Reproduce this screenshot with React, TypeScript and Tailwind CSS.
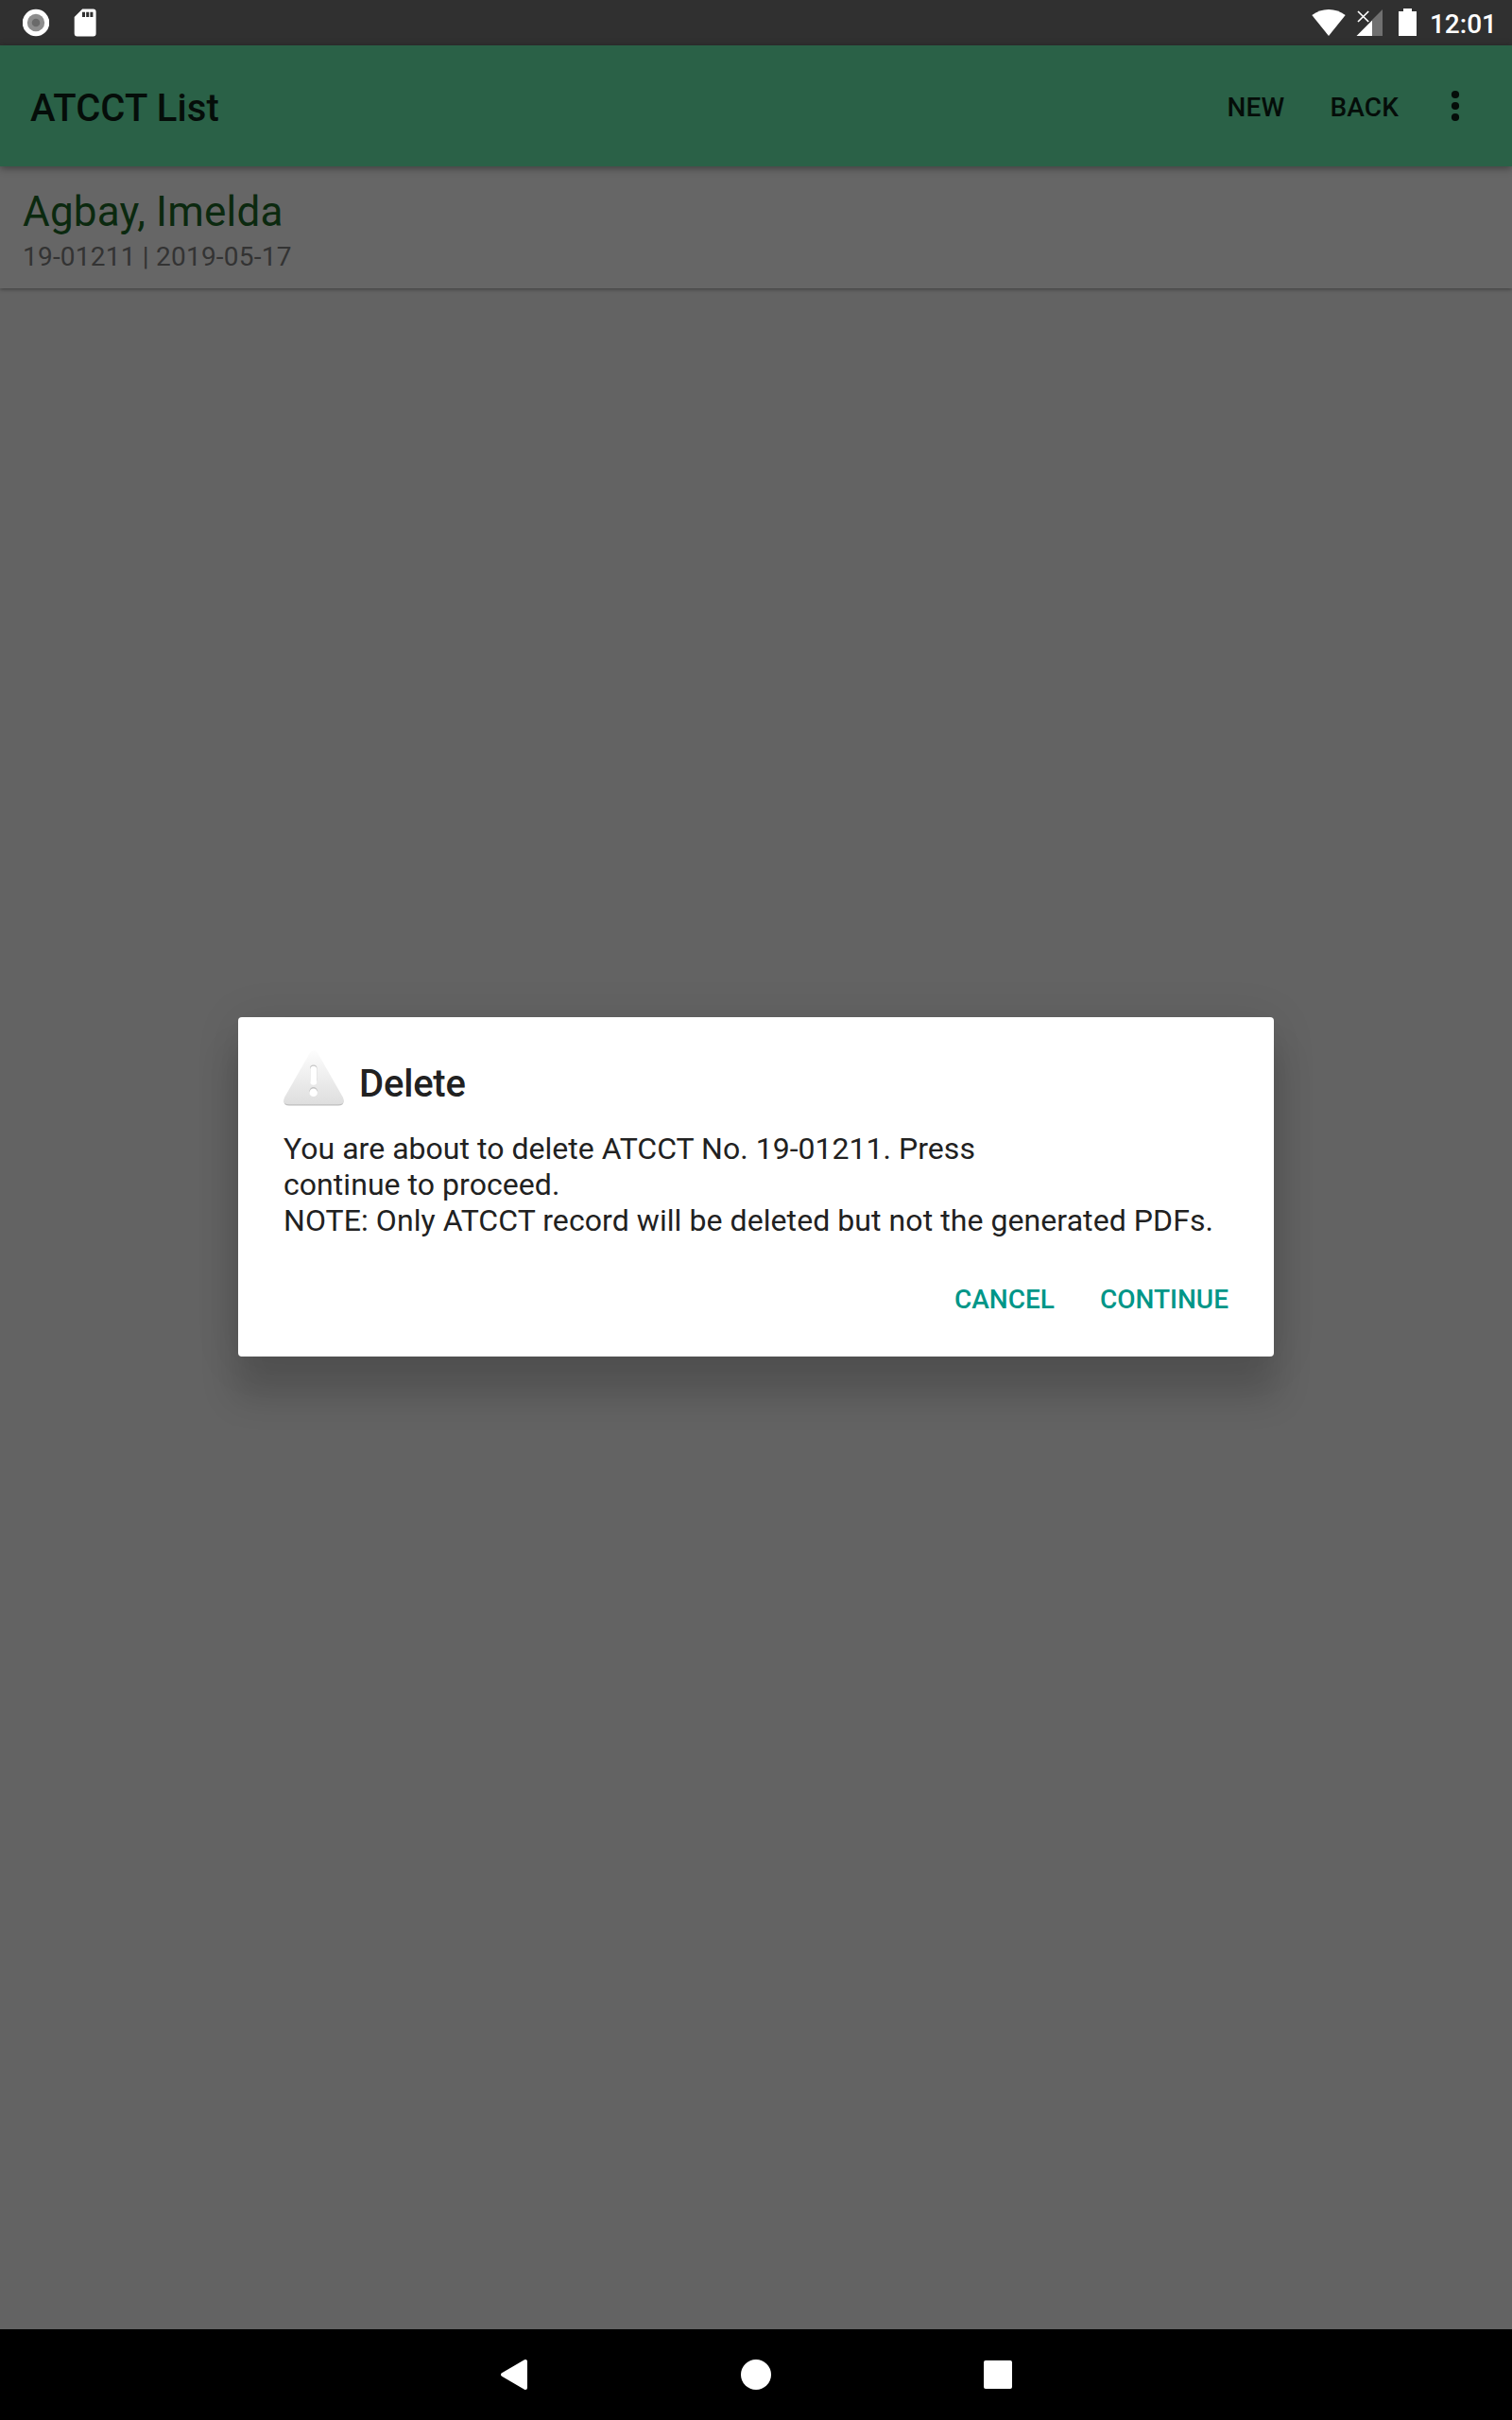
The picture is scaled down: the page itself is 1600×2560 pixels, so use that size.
function StatusBar() {
  return (
    <header className="flex h-12 shrink-0 items-start justify-between bg-[#303030]">
      <div className="flex">
        <svg className="ml-6 h-12 w-7" viewBox="0 0 28 48">
          <circle cx="14" cy="24" r="14.3" fill="#fff" />
          <circle cx="14" cy="24" r="9.2" fill="#8d8d8d" />
          <circle cx="14" cy="24" r="4.3" fill="#6a6a6a" />
        </svg>
        <svg className="ml-6 h-12 w-7" viewBox="0 0 28 48">
          <path
            fill="#fff"
            fillRule="evenodd"
            d="M11.2 9.6H22.6a3 3 0 0 1 3 3V35.6a3 3 0 0 1-3 3H5.7a3 3 0 0 1-3-3V18zM11 12.8V18h3v-5.2zM15.2 12.8V18h3v-5.2zM19.4 12.8V18h3v-5.2z"
          />
        </svg>
      </div>
      <div className="flex items-start pr-4 text-white">
        <svg className="h-12 w-9" viewBox="0 0 36 48">
          <path fill="#fff" d="M18 38 .3 16C5.500 12 11.500 10 18 10S30.500 12 35.700 16z" />
        </svg>
        <svg className="ml-[11px] h-12 w-7" viewBox="0 0 28 48">
          <path fill="#707070" d="M28 10V38H17V21z" />
          <path fill="#fff" d="M.5 38H17V21.500z" />
          <path stroke="#fff" strokeWidth="1.700" d="m2 12 11.200 11M13.200 12 2 23" />
        </svg>
        <svg className="ml-[17px] h-12 w-[19px]" viewBox="0 0 19 48">
          <path fill="#fff" d="M5 9h9v3h5v26H0V12h5z" />
        </svg>
        <span className="mt-[9px] ml-[14px] text-[28px] leading-[33px] font-medium">12:01</span>
      </div>
    </header>
  );
}

function AppBar() {
  return (
    <div className="z-10 flex h-32 shrink-0 items-start justify-between bg-[#2a6147] pl-8 text-[#050d09] shadow-[0_2px_8px_rgba(0,0,0,0.4)]">
      <h1 className="mt-[43px] text-[40px] leading-[47px] font-medium tracking-[0.12px]">ATCCT List</h1>
      <div className="flex items-start text-[28px] leading-[33px] font-medium">
        <button className="mt-[49px] tracking-[0.2px]">NEW</button>
        <button className="mt-[49px] ml-12 tracking-[0.15px]">BACK</button>
        <svg className="mr-12 ml-12 h-32 w-6" viewBox="0 0 24 128" fill="currentColor">
          <circle cx="12" cy="52" r="4.100" />
          <circle cx="12" cy="64" r="4.100" />
          <circle cx="12" cy="76" r="4.100" />
        </svg>
      </div>
    </div>
  );
}

function RecordCard() {
  return (
    <div className="h-[129px] shrink-0 bg-[#666666] px-6 pt-[22px] shadow-[0_1px_4px_rgba(0,0,0,0.4)]">
      <div className="text-[44px] leading-[52px] tracking-[0.18px] text-[#0b290f]">Agbay, Imelda</div>
      <div className="mt-[5px] text-[28px] leading-[33px] tracking-[0.22px] text-[#333333]">
        19-01211 | 2019-05-17
      </div>
    </div>
  );
}

function AlertIcon() {
  return (
    <svg className="h-16 w-16" viewBox="0 0 64 64">
      <defs>
        <linearGradient id="alertFill" x1="0" y1="0" x2="0" y2="1">
          <stop offset="0" stopColor="#fdfdfd" />
          <stop offset="1" stopColor="#dedede" />
        </linearGradient>
        <linearGradient id="alertEdge" x1="0" y1="0" x2="0" y2="1">
          <stop offset="0.800" stopColor="#bcbcbc" stopOpacity="0" />
          <stop offset="1" stopColor="#b8b8b8" />
        </linearGradient>
      </defs>
      <path fill="url(#alertEdge)" d="M27.500 7.500Q32 1 36.500 7.500L63 54Q65.500 61.500 58 61.500H6Q-1.500 61.500 1 54z" />
      <path fill="url(#alertFill)" d="M27.500 6.500Q32 0 36.500 6.500L63 53Q65.500 60.300 58 60.300H6Q-1.500 60.300 1 53z" />
      <rect x="28" y="18.500" width="7.500" height="20" rx="3.700" fill="#c6c6c6" />
      <rect x="28.300" y="19.800" width="7" height="20" rx="3.500" fill="#fff" />
      <circle cx="31.700" cy="46.500" r="4.400" fill="#c0c0c0" />
      <circle cx="31.700" cy="47.800" r="4.300" fill="#fff" />
    </svg>
  );
}

function DeleteDialog() {
  return (
    <div className="h-[359px] w-[1096px] rounded-[4px] bg-white px-12 text-[#212121] shadow-[0_40px_36px_4px_rgba(0,0,0,0.15),0_4px_48px_rgba(0,0,0,0.1)]">
      <div className="flex items-start pt-8">
        <AlertIcon />
        <h2 className="mt-[15px] ml-4 text-[40px] leading-[47px] font-medium tracking-[-0.2px]">Delete</h2>
      </div>
      <p className="mt-6 text-[32px] leading-[38px]">
        <span className="tracking-[0.03px]">You are about to delete ATCCT No. 19-01211. Press</span>
        <br />
        <span className="tracking-[0.05px]">continue to proceed.</span>
        <br />
        <span className="tracking-[0.07px]">
          NOTE: Only ATCCT record will be deleted but not the generated PDFs.
        </span>
      </p>
      <div className="mt-[48px] flex justify-end gap-12 text-[28px] leading-[33px] font-medium text-[#009688]">
        <button>CANCEL</button>
        <button>CONTINUE</button>
      </div>
    </div>
  );
}

function NavigationBar() {
  return (
    <nav className="flex h-24 shrink-0 items-center justify-center gap-48 bg-black">
      <svg className="h-16 w-16" viewBox="0 0 64 64">
        <path fill="#fff" stroke="#fff" strokeWidth="4" strokeLinejoin="round" d="M20 32 44 18V46z" />
      </svg>
      <svg className="h-16 w-16" viewBox="0 0 64 64">
        <circle cx="32" cy="32" r="16" fill="#fff" />
      </svg>
      <svg className="h-16 w-16" viewBox="0 0 64 64">
        <rect x="17" y="17" width="30" height="30" rx="2" fill="#fff" />
      </svg>
    </nav>
  );
}

export default function App() {
  return (
    <div className="flex h-[2560px] w-[1600px] flex-col overflow-hidden bg-[#636363] font-['Roboto',sans-serif]">
      <StatusBar />
      <main className="relative flex min-h-0 flex-1 flex-col">
        <AppBar />
        <RecordCard />
        <div className="absolute inset-0 z-20 flex items-start justify-center pt-[1028px]">
          <DeleteDialog />
        </div>
      </main>
      <NavigationBar />
    </div>
  );
}
